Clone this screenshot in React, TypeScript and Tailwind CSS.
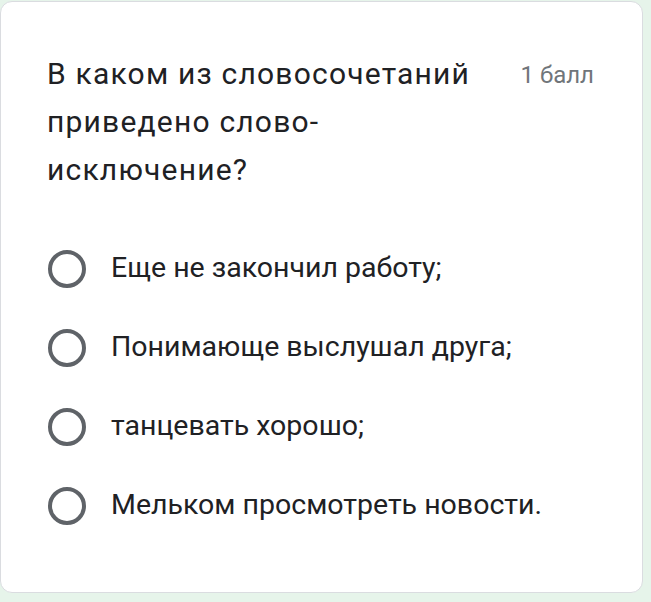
const OPTIONS = [
  'Еще не закончил работу;',
  'Понимающе выслушал друга;',
  'танцевать хорошо;',
  'Мельком просмотреть новости.',
];

export default function App() {
  return (
    <div className="min-h-screen w-[651px] h-[602px] bg-[#e6f4ea] pt-px" style={{ fontFamily: 'Roboto, "Noto Sans", sans-serif' }}>
      <div className="w-[643px] h-[592px] bg-white rounded-[12px] border border-[#dadce0] pl-[46px] pr-[48px] pt-[48px]">
        <div className="flex items-start">
          <h1 className="w-[445px] text-[30px] tracking-[1.2px] leading-[48px] text-[#202124] font-normal">
            В каком из словосочетаний приведено слово-исключение?
          </h1>
          <span className="ml-auto mt-[9px] text-[24px] leading-[32px] text-[#70757a]">1 балл</span>
        </div>
        <div className="mt-[35px] flex flex-col">
          {OPTIONS.map((o) => (
            <label key={o} className="h-[79px] flex items-center">
              <span className="ml-px w-[38px] h-[38px] rounded-full border-[4px] border-[#5f6368] shrink-0" />
              <span className="ml-[25px] text-[28.5px] text-[#202124] leading-none">{o}</span>
            </label>
          ))}
        </div>
      </div>
    </div>
  );
}
